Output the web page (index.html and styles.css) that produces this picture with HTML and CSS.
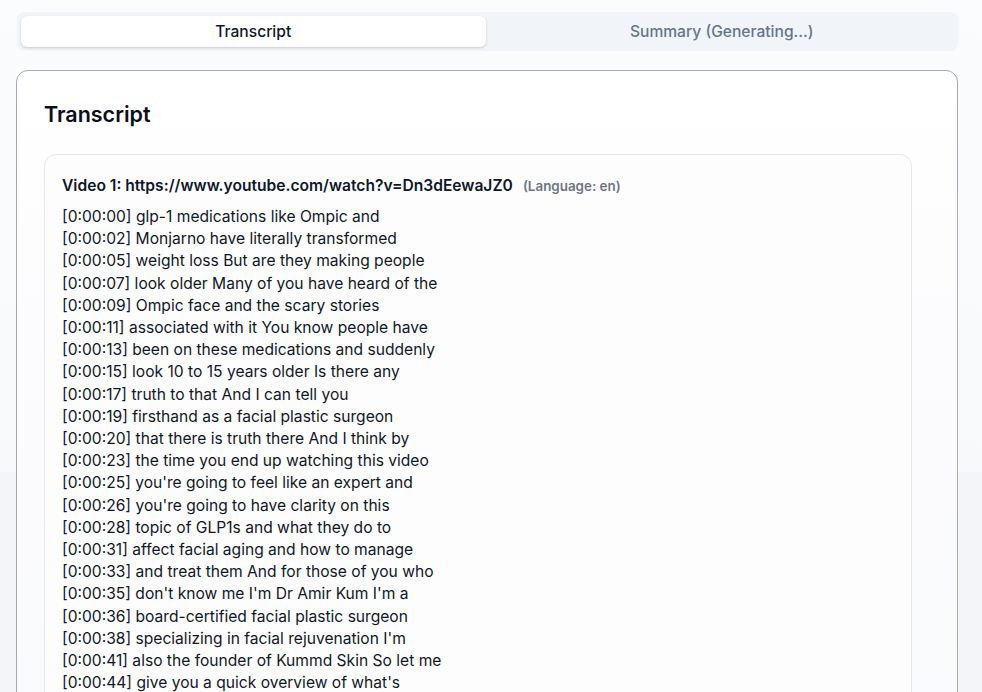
FILE: index.html
```html
<!DOCTYPE html>
<html>
<head>
<meta charset="utf-8">
<link rel="stylesheet" href="styles.css">
</head>
<body>
<div class="page">
  <div class="tabs">
    <div class="tab active">Transcript</div>
    <div class="tab">Summary (Generating...)</div>
  </div>
  <div class="card">
    <h2 class="title">Transcript</h2>
    <div class="video">
      <div class="video-head"><span class="video-url">Video 1: https://www.youtube.com/watch?v=Dn3dEewaJZ0</span><span class="lang">(Language: en)</span></div>
      <div class="lines">
        <div>[0:00:00] glp-1 medications like Ompic and</div>
        <div>[0:00:02] Monjarno have literally transformed</div>
        <div>[0:00:05] weight loss But are they making people</div>
        <div>[0:00:07] look older Many of you have heard of the</div>
        <div>[0:00:09] Ompic face and the scary stories</div>
        <div>[0:00:11] associated with it You know people have</div>
        <div>[0:00:13] been on these medications and suddenly</div>
        <div>[0:00:15] look 10 to 15 years older Is there any</div>
        <div>[0:00:17] truth to that And I can tell you</div>
        <div>[0:00:19] firsthand as a facial plastic surgeon</div>
        <div>[0:00:20] that there is truth there And I think by</div>
        <div>[0:00:23] the time you end up watching this video</div>
        <div>[0:00:25] you're going to feel like an expert and</div>
        <div>[0:00:26] you're going to have clarity on this</div>
        <div>[0:00:28] topic of GLP1s and what they do to</div>
        <div>[0:00:31] affect facial aging and how to manage</div>
        <div>[0:00:33] and treat them And for those of you who</div>
        <div>[0:00:35] don't know me I'm Dr Amir Kum I'm a</div>
        <div>[0:00:36] board-certified facial plastic surgeon</div>
        <div>[0:00:38] specializing in facial rejuvenation I'm</div>
        <div>[0:00:41] also the founder of Kummd Skin So let me</div>
        <div>[0:00:44] give you a quick overview of what's</div>
      </div>
    </div>
  </div>
</div>
</body>
</html>
```

FILE: styles.css
```css
html {
  background: linear-gradient(180deg, #fbfcfd 0px, #f8f9fb 472px, #f4f5f9 472px, #f4f5f9 100%);
  min-height: 100%;
}
body {
  margin: 0;
  font-family: Inter, "Noto Sans", sans-serif;
  color: #0f172a;
}
.page {
  padding: 12px 24px 0 16px;
  height: 692px;
  overflow: hidden;
  box-sizing: border-box;
}
.tabs {
  display: flex;
  margin: 0 0 0 1px;
  padding: 4px;
  gap: 4px;
  background: #f1f4f8;
  border-radius: 8px;
  height: 31px;
  margin-bottom: 19px;
}
.tab {
  flex: 1;
  display: flex;
  align-items: center;
  justify-content: center;
  font-size: 15.6px;
  font-weight: 500;
  color: #64748b;
  border-radius: 6px;
}
.tab.active {
  background: #ffffff;
  color: #0f172a;
  box-shadow: 0 1px 3px rgba(15, 23, 42, 0.12), 0 1px 2px rgba(15, 23, 42, 0.06);
}
.card {
  border: 1px solid #a7a8b3;
  border-radius: 12px;
  background: linear-gradient(180deg, #ffffff 0%, #fcfcfe 40%, #f9fafd 100%);
  padding: 27px 45px 0 27px;
  height: 700px;
}
.title {
  margin: 0 0 24px 0;
  font-size: 21.5px;
  line-height: 32px;
  font-weight: 600;
  color: #0b0f1a;
}
.video {
  border: 1px solid #e5e8ef;
  border-radius: 12px;
  background: #fdfdfe;
  padding: 21px 17px;
}
.video-head {
  display: flex;
  align-items: baseline;
  gap: 10px;
  line-height: 20px;
  margin-bottom: 10px;
}
.video-url {
  font-size: 15.6px;
  font-weight: 600;
  color: #0f172a;
}
.lang {
  font-size: 13.4px;
  font-weight: 600;
  color: #6b7789;
}
.lines {
  font-size: 15.6px;
  line-height: 22.2px;
  color: #111827;
}
```
